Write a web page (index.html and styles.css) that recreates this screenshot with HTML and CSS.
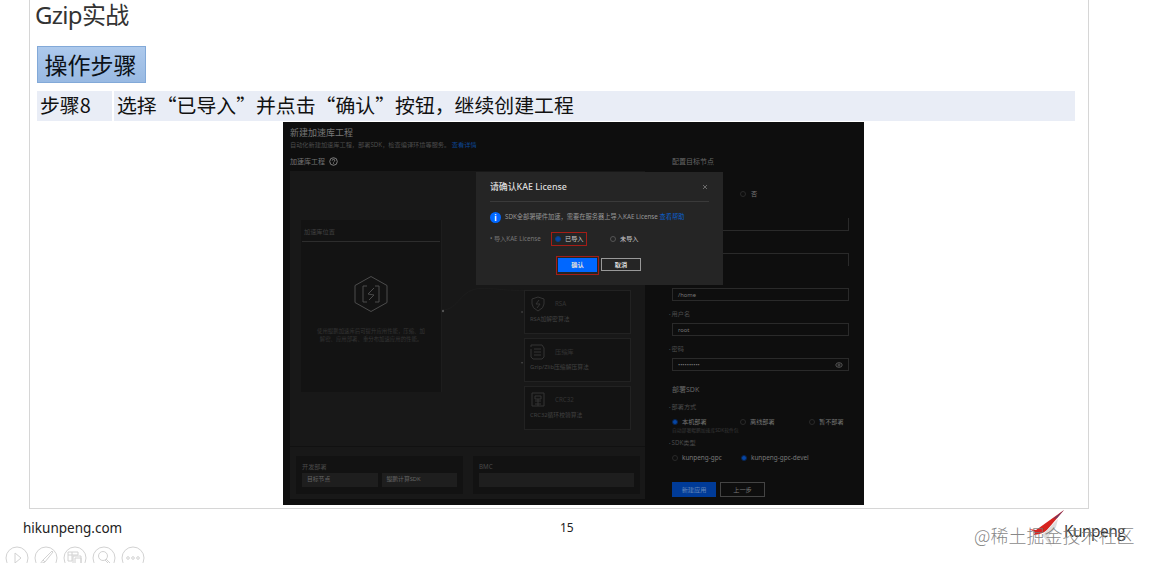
FILE: index.html
```html
<!DOCTYPE html>
<html lang="zh-CN">
<head>
    <meta charset="UTF-8">
    <title>Gzip实战</title>
    <link rel="stylesheet" href="styles.css">
</head>
<body>
    <main class="slide">
        <h1>Gzip实战</h1>
        <div class="tag">操作步骤</div>
        <div class="step">
            <div class="step-no">步骤8</div>
            <div class="step-text">选择“已导入”并点击“确认”按钮，继续创建工程</div>
        </div>

        <div class="app">
            <section class="project">
                <h2>新建加速库工程</h2>
                <p class="intro">自动化新建加速库工程，部署SDK，检查编译环境等服务。 <a>查看详情</a></p>
                <h3>加速库工程
                    <svg class="help" viewBox="0 0 10 10"><circle cx="5" cy="5" r="4.2"/><path d="M3.6 4a1.4 1.4 0 1 1 2 1.2Q5 5.5 5 6.1M5 7v.8"/></svg>
                </h3>
                <div class="panel">
                    <div class="canvas">
                        <div class="lib">
                            <div class="lib-title">加速库位置</div>
                            <div class="lib-body">
                                <svg class="hex" viewBox="0 0 34 38"><path d="M17 1.5l16 9v17l-16 9-16-9v-17z"/><path d="M13 11H9v16h4M21 11h4v16h-4M20 13l-6 6 6 1-5 5"/></svg>
                                <p>使用鲲鹏加速库后可提升应用性能，压缩、加<br>解密、应用部署、重分布加速应用的性能。</p>
                            </div>
                        </div>
                        <svg class="link" viewBox="0 0 84 180"><path d="M0 90C18 90 18 68 40 68S60 70 84 70"/><circle cx="1" cy="91" r="1.2"/><circle cx="82" cy="92" r=".8"/><circle cx="82" cy="144" r=".8"/></svg>
                        <div class="algos">
                            <div class="algo">
                                <div class="algo-head"><svg viewBox="0 0 16 16"><path d="M8 1l6 2v5q0 4-6 7-6-3-6-7V3zM9 4L6 8h4l-3 4"/></svg><span>RSA</span></div>
                                <p>RSA加解密算法</p>
                            </div>
                            <div class="algo">
                                <div class="algo-head"><svg viewBox="0 0 16 16"><path d="M1 3V1h11l2 3v9l-2 2H3l-2-2V5M4 5h7M4 8h7M4 11h7"/></svg><span>压缩库</span></div>
                                <p>Gzip/Zlib压缩解压算法</p>
                            </div>
                            <div class="algo">
                                <div class="algo-head"><svg viewBox="0 0 16 16"><path d="M2 1h12v13H2zM5 4h6v3H5zM5 9h6M8 7v7M5 12h6"/></svg><span>CRC32</span></div>
                                <p>CRC32循环校验算法</p>
                            </div>
                        </div>
                    </div>
                    <div class="nodes">
                        <div class="node">
                            <p>开发部署</p>
                            <div class="chips"><span>目标节点</span><span>鲲鹏计算SDK</span></div>
                        </div>
                        <div class="node">
                            <p>BMC</p>
                            <div class="chips"><span></span></div>
                        </div>
                    </div>
                </div>
            </section>

            <section class="config">
                <h3>配置目标节点</h3>
                <div class="remote"><i class="radio"></i>否</div>
                <div class="field top"></div>
                <div class="field half"></div>
                <div class="field">/home</div>
                <label>用户名</label>
                <div class="field">root</div>
                <label>密码</label>
                <div class="field">••••••••••<svg class="eye" viewBox="0 0 8 8"><ellipse cx="4" cy="4" rx="3.2" ry="2.3"/><circle cx="4" cy="4" r="1"/></svg></div>
                <h3 class="sdk">部署SDK</h3>
                <label class="mode">部署方式</label>
                <div class="options three">
                    <span><i class="radio on"></i>本机部署</span>
                    <span><i class="radio"></i>离线部署</span>
                    <span><i class="radio"></i>暂不部署</span>
                </div>
                <p class="hint">自动部署鲲鹏加速库SDK软件包</p>
                <label class="type">SDK类型</label>
                <div class="options two">
                    <span><i class="radio"></i>kunpeng-gpc</span>
                    <span><i class="radio on"></i>kunpeng-gpc-devel</span>
                </div>
                <div class="actions"><button class="create">新建应用</button><button>上一步</button></div>
            </section>

            <div class="modal">
                <div class="modal-head">请确认KAE License<svg class="close" viewBox="0 0 6 6"><path d="M1 1l4 4M5 1L1 5"/></svg></div>
                <div class="notice"><b>i</b><span>SDK全部署硬件加速，需要在服务器上导入KAE License <a>查看帮助</a></span></div>
                <div class="import">
                    <span class="import-label">• 导入KAE License</span>
                    <span class="choice marked"><i class="radio on"></i>已导入</span>
                    <span class="choice"><i class="radio"></i>未导入</span>
                </div>
                <div class="modal-actions">
                    <div class="marked"><button class="ok">确认</button></div>
                    <button>取消</button>
                </div>
            </div>
        </div>
    </main>

    <footer>
        <span class="site">hikunpeng.com</span>
        <span class="page">15</span>
        <div class="brand">
            <svg viewBox="0 0 36 37"><path d="M1 19l7 1L36 0 19 20q-4 4-13 5l1-3z" fill="#d7231f"/><path d="M30 9l-16 16 10 12-3-11 7-9z" fill="#ddd"/><path d="M36 0L25 9l4-1z" fill="#6c3b68"/></svg>
            <span>Kunpeng</span>
            <div class="watermark">@稀土掘金技术社区</div>
        </div>
    </footer>
    <nav class="tools">
        <svg viewBox="0 0 24 24"><circle cx="12" cy="12" r="11"/><path d="M10 7l6 5-6 5z"/></svg>
        <svg viewBox="0 0 24 24"><circle cx="12" cy="12" r="11"/><path d="M18 5l-9 9 2 2 8-10zM9 14l-3 4 5-2"/></svg>
        <svg viewBox="0 0 24 24"><circle cx="12" cy="12" r="11"/><path d="M5 6h10v3M5 6v9h4M5 9h10M9 6v9M10 10h8v8h-8zM12 12h6v8h-6z"/></svg>
        <svg viewBox="0 0 24 24"><circle cx="12" cy="12" r="11"/><circle cx="11" cy="10" r="4.5"/><path d="M14 13l5 5-1 1-5-5"/></svg>
        <svg viewBox="0 0 24 24"><circle cx="12" cy="12" r="11"/><circle cx="7" cy="12" r="1.3"/><circle cx="12" cy="12" r="1.3"/><circle cx="17" cy="12" r="1.3"/></svg>
    </nav>
</body>
</html>
```
FILE: styles.css
```css
* { box-sizing: border-box; }
body { margin: 0; height: 563px; overflow: hidden; background: #fff; color: #222; font-family: "Noto Sans", "Noto Sans CJK SC", sans-serif; }
h1, h2, h3, p { margin: 0; font-weight: 400; }
svg { fill: none; stroke: currentColor; flex: none; }
button { padding: 0; font: inherit; color: inherit; background: none; border: 1px solid #555; }

/* slide */
.slide { width: 1060px; height: 509px; margin-left: 29px; padding-left: 7px; border: 1px solid #d6d6d6; border-top: 0; }
h1 { height: 46px; margin-left: -2px; color: #333; font-size: 24px; line-height: 30px; letter-spacing: -0.7px; white-space: nowrap; }
.tag { width: 109px; height: 37px; padding-right: 2px; background: linear-gradient(#adc9ec, #98b9e2); border: 1px solid #82a9d8; color: #0b1118; font: 23px/34px "Noto Sans CJK SC", sans-serif; text-align: center; }
.step { display: flex; gap: 2px; width: 1038px; margin-top: 8px; color: #111; font: 19.87px/28px "Noto Sans CJK SC", sans-serif; }
.step div { height: 30px; background: #e9edf6; white-space: nowrap; }
.step-no { width: 75px; padding-left: 3px; }
.step-text { flex: 1; padding-left: 3px; }

/* application window */
.app { position: relative; display: flex; width: 581px; height: 383px; margin: 1px 0 0 246px; padding: 4px 15px 0 7px; background: #0e0e0e; color: #606060; font-size: 6.2px; line-height: 8px; white-space: nowrap; }
.app a { color: #0c4797; }
.app h3 { font-size: 7px; line-height: 10px; }
.project { width: 355px; }
.project h2 { height: 14px; color: #777; font-size: 9px; line-height: 14px; }
.intro { height: 17px; color: #4c4c4c; line-height: 10px; }
.project h3 { display: flex; gap: 4px; height: 14px; color: #747474; }
.help { width: 9px; height: 9px; color: #888; }
.panel { height: 328px; background: #181818; }
.canvas { display: flex; height: 276px; padding: 49px 14px 0 11px; border-bottom: 1px solid #111; }
.lib { width: 141px; height: 172px; padding: 8px 1px 0; background: #131313; border-right: 1px solid #1d1d1d; }
.lib-title { height: 14px; padding-left: 2px; border-bottom: 1px solid #2d2d2d; color: #414141; }
.lib-body { display: flex; flex-direction: column; align-items: center; padding-top: 33px; text-align: center; color: #353535; }
.hex { width: 34px; height: 38px; margin-bottom: 14px; color: #4c4c4c; }
.lib-body p { font-size: 5.4px; }
.link { width: 82px; height: 180px; color: #1d1d1d; }
.link circle { fill: #555; stroke: none; }
.algos { display: flex; flex-direction: column; gap: 4px; padding-top: 70px; }
.algo { width: 107px; height: 44px; padding: 5px; border: 1px solid #222; background: #131313; color: #343434; }
.algo-head { display: flex; gap: 9px; align-items: center; margin-bottom: 3px; }
.algo svg { width: 16px; height: 16px; }
.algo p { color: #424242; font-size: 5.8px; }
.nodes { display: flex; gap: 10px; padding: 9px 5px 0 6px; }
.node { flex: 1; height: 38px; padding: 7px 6px; background: #121212; color: #494949; }
.chips { display: flex; gap: 4px; margin-top: 2px; }
.chips span { flex: 1; height: 14px; padding-left: 5px; background: #1e1e1e; color: #666; font-size: 5.8px; line-height: 13px; }
.radio { display: inline-block; width: 6px; height: 6px; border: 1px solid #292929; border-radius: 50%; flex: none; }
.radio.on { background: #0646a5; border: 1px solid #082450; }

/* node settings */
.config { width: 177px; margin-left: 27px; padding-top: 31px; }
.config h3 { color: #666; }
.remote { display: flex; gap: 5px; align-items: center; margin: 23px 0 20px 68px; color: #777; }
.field { display: flex; justify-content: space-between; align-items: center; height: 13px; margin-bottom: 22px; padding: 0 5px; border: 1px solid #2a2a2a; color: #777; font-size: 5.8px; line-height: 10px; }
.field.top { border-top: 0; }
.field.half { border-bottom: 0; }
.config label { display: block; height: 8px; margin: -13px 0 5px -3px; color: #4b4b4b; }
.config label::before { content: "•"; font-size: 4px; margin-right: 1px; }
.eye { width: 8px; height: 8px; color: #555; }
.config .sdk { margin-top: -8px; }
.config .mode { margin: 8px 0 7px -3px; }
.options { display: grid; color: #777; }
.options.three { grid-template-columns: 68px 69px 40px; }
.options.two { grid-template-columns: 69px 108px; }
.options span { display: flex; gap: 4px; align-items: center; }
.options.two { font-size: 6.4px; }
.hint { color: #383838; font-size: 4.8px; line-height: 9px; }
.config .type { margin: 4px 0 7px -3px; }
.actions { display: flex; gap: 4px; margin-top: 20px; }
.actions button { width: 45px; height: 15px; border-color: #444; color: #777; }
.actions .create { width: 44px; border: 0; background: #003b98; color: #6688ba; }

/* license dialog */
.modal { position: absolute; left: 193px; top: 50px; width: 247px; height: 113px; padding: 7px 14px; background: #252525; color: #bbb; }
.app .modal a { color: #0b61d0; }
.modal-head { display: flex; justify-content: space-between; align-items: center; height: 23px; padding-bottom: 7px; border-bottom: 1px solid #3a3a3a; color: #ddd; font-size: 8.9px; font-weight: 500; }
.close { width: 6px; height: 6px; margin-right: 1px; color: #888; stroke-width: .7; }
.notice { display: flex; gap: 4px; align-items: center; height: 12px; margin-top: 9px; font-size: 6.25px; color: #989898; }
.notice b { width: 11px; height: 11px; border-radius: 50%; background: #0067ff; color: #fff; font-size: 8px; line-height: 11px; text-align: center; }
.import { display: flex; align-items: center; height: 14px; margin-top: 9px; }
.import-label { width: 61px; color: #777; font-size: 6.2px; }
.choice { display: flex; gap: 4px; align-items: center; width: 36px; height: 14px; padding-left: 3px; color: #ccc; }
.choice + .choice { margin-left: 20px; }
.choice .radio { border-color: #555; }
.choice .radio.on { border-color: #083f85; }
.marked { border: 1px solid #a41d16; }
.modal-actions { display: flex; gap: 2px; margin: 10px 0 0 66px; color: #ddd; }
.modal-actions .marked { height: 19px; padding: 1px; }
.modal-actions button { display: block; width: 40px; height: 13px; margin-top: 2px; border-color: #999; font-weight: 700; line-height: 10px; }
.modal-actions .ok { width: 39px; margin-top: 0; border: 0; height: 14px; background: #0067ff; }

/* footer */
footer { display: flex; height: 36px; padding-left: 23px; }
.site { width: 537px; padding-top: 9px; font-size: 13.5px; line-height: 20px; }
.page { width: 468px; padding-top: 11px; font-size: 12px; line-height: 16px; }
.brand { position: relative; display: flex; width: 110px; }
.brand svg { width: 36px; height: 37px; margin-top: 1px; stroke: none; }
.brand span { padding-top: 12px; color: #333; font: 15.5px/20px "Open Sans", sans-serif; letter-spacing: -0.5px; }
.watermark { position: absolute; left: -54px; top: 14px; color: rgba(120, 120, 120, .9); font: 300 18px/24px "Noto Sans CJK SC", sans-serif; white-space: nowrap; }
.tools { display: flex; gap: 5px; padding: 1px 0 0 5px; color: #d2d2d2; }
.tools svg { width: 24px; height: 24px; }
```
